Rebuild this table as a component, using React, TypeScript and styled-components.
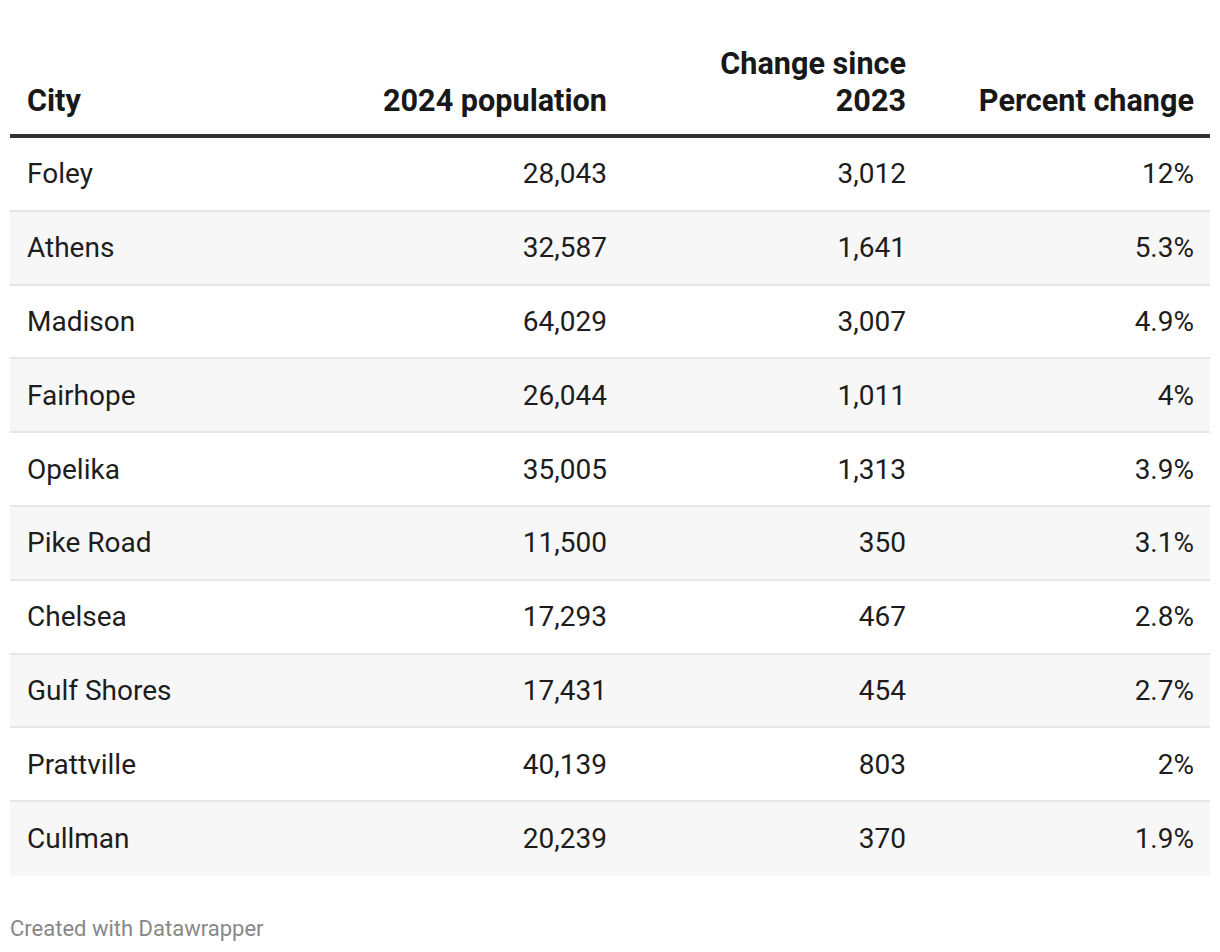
import styled, { createGlobalStyle } from "styled-components";

const GlobalStyle = createGlobalStyle`
  html, body {
    margin: 0;
    padding: 0;
    background: #ffffff;
  }
  body {
    font-family: Roboto, "Liberation Sans", sans-serif;
    color: #1d1d1d;
  }
`;

const Page = styled.div`
  padding: 45px 10px 0;
`;

const Table = styled.div`
  display: grid;
  grid-template-columns: 313px 300px 299px 288px;
`;

const HeadCell = styled.div<{ $right?: boolean }>`
  display: flex;
  align-items: flex-end;
  justify-content: ${(p) => (p.$right ? "flex-end" : "flex-start")};
  text-align: ${(p) => (p.$right ? "right" : "left")};
  padding: 0 16px 15px 17px;
  font-size: 30.6px;
  font-weight: 700;
  line-height: 37px;
  color: #181818;
  border-bottom: 4px solid #333333;
`;

const Cell = styled.div<{ $right?: boolean; $shaded?: boolean; $last?: boolean }>`
  height: 71.8px;
  display: flex;
  align-items: center;
  justify-content: ${(p) => (p.$right ? "flex-end" : "flex-start")};
  padding: 0 16px 0 17px;
  font-size: 28px;
  background: ${(p) => (p.$shaded ? "#f7f7f7" : "#ffffff")};
  border-bottom: ${(p) => (p.$last ? "2px solid transparent" : "2px solid #e6e6e6")};
`;

const Footer = styled.div`
  margin-top: 40px;
  font-size: 22px;
  color: #888888;
`;

const rows: [string, string, string, string][] = [
  ["Foley", "28,043", "3,012", "12%"],
  ["Athens", "32,587", "1,641", "5.3%"],
  ["Madison", "64,029", "3,007", "4.9%"],
  ["Fairhope", "26,044", "1,011", "4%"],
  ["Opelika", "35,005", "1,313", "3.9%"],
  ["Pike Road", "11,500", "350", "3.1%"],
  ["Chelsea", "17,293", "467", "2.8%"],
  ["Gulf Shores", "17,431", "454", "2.7%"],
  ["Prattville", "40,139", "803", "2%"],
  ["Cullman", "20,239", "370", "1.9%"],
];

function App() {
  return (
    <Page>
      <GlobalStyle />
      <Table>
        <HeadCell>City</HeadCell>
        <HeadCell $right>2024 population</HeadCell>
        <HeadCell $right>
          Change since
          <br />
          2023
        </HeadCell>
        <HeadCell $right>Percent change</HeadCell>
        {rows.map((r, i) =>
          r.map((v, j) => (
            <Cell
              key={`${i}-${j}`}
              $right={j > 0}
              $shaded={i % 2 === 1}
              $last={i === rows.length - 1}
            >
              {v}
            </Cell>
          ))
        )}
      </Table>
      <Footer>Created with Datawrapper</Footer>
    </Page>
  );
}

export default App;
